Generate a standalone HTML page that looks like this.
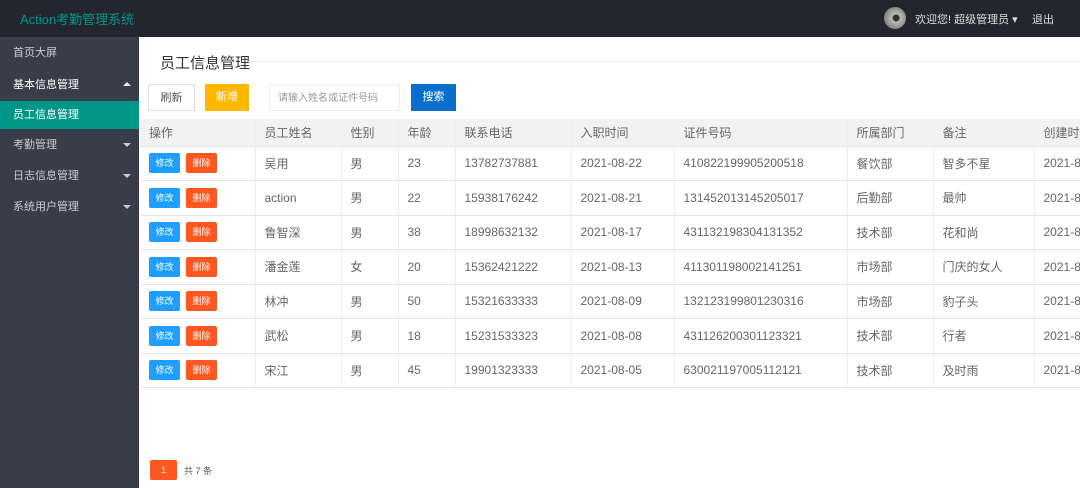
<!DOCTYPE html>
<html><head><meta charset="utf-8"><style>
*{margin:0;padding:0;box-sizing:border-box}
body{width:1080px;height:488px;overflow:hidden;background:#fff;font-family:"Liberation Sans","Noto Sans CJK SC",sans-serif;font-size:12px;color:#666;position:relative}
.hd{position:absolute;left:0;top:0;width:1080px;height:37px;background:#23262e}
.logo{position:absolute;left:20px;top:9px;color:#009688;font-size:13px}
.user{position:absolute;left:884px;top:7px;width:22px;height:22px;border-radius:50%;background:radial-gradient(circle at 55% 50%,#333 0 3px,#bbb 4px,#888 11px)}
.ht{position:absolute;top:11px;color:#ddd;font-size:11px}
.sb{position:absolute;left:0;top:37px;width:139px;height:451px;background:#393d49}
.mi{position:absolute;left:0;width:139px;height:28px;line-height:28px;padding-left:13px;color:#ccc;font-size:11px}
.mi.on{background:#009688;color:#fff}
.tri{position:absolute;right:8px;top:12px;border:4px solid transparent;border-top-color:#ccc}
.up{top:7px;border-top-color:transparent;border-bottom-color:#eee}
.title{position:absolute;left:160px;top:52px;font-size:15px;color:#333}
.tline{position:absolute;left:248px;top:61px;width:832px;height:1px;background:#f0f0f0}
.btn{position:absolute;top:84px;height:27px;line-height:27px;text-align:center;font-size:11px;color:#fff}
table{position:absolute;left:140px;top:119px;border-collapse:collapse;table-layout:fixed;width:960px}
td,th{border-bottom:1px solid #e6e6e6;border-right:1px solid #eee;text-align:left;font-weight:normal;padding-left:9px;height:34.5px;font-size:12px;color:#666;white-space:nowrap;overflow:hidden}
th{background:#f2f2f2;height:27px;color:#666}
.b{display:inline-block;width:31px;height:20px;line-height:20px;text-align:center;color:#fff;font-size:9px;border-radius:2px;vertical-align:middle}
.e{background:#1e9fff;margin-right:6px}.d{background:#ff5722}
</style></head><body>
<div class="hd"><div class="logo">Action考勤管理系统</div>
<div class="user"></div><div class="ht" style="left:915px">欢迎您! 超级管理员 ▾</div><div class="ht" style="left:1032px">退出</div></div>
<div class="sb">
<div class="mi" style="top:2px">首页大屏</div>
<div class="mi" style="top:34px;color:#fff">基本信息管理<span class="tri up"></span></div>
<div class="mi on" style="top:64px">员工信息管理</div>
<div class="mi" style="top:94px">考勤管理<span class="tri"></span></div>
<div class="mi" style="top:125px">日志信息管理<span class="tri"></span></div>
<div class="mi" style="top:156px">系统用户管理<span class="tri"></span></div>
</div>
<div class="title">员工信息管理</div><div class="tline"></div>
<div class="btn" style="left:148px;width:47px;border:1px solid #ddd;color:#555;background:#fff">刷新</div>
<div class="btn" style="left:205px;width:44px;background:#ffb800">新增</div>
<div class="btn" style="left:269px;width:131px;border:1px solid #eee;color:#999;text-align:left;padding-left:8px;font-size:10px;background:#fff">请输入姓名或证件号码</div>
<div class="btn" style="left:411px;width:45px;background:#0a6fcc">搜索</div>
<table>
<colgroup><col style="width:115px"><col style="width:86px"><col style="width:57px"><col style="width:57px"><col style="width:116px"><col style="width:103px"><col style="width:173px"><col style="width:86px"><col style="width:101px"><col style="width:66px"></colgroup>
<tr><th>操作</th><th>员工姓名</th><th>性别</th><th>年龄</th><th>联系电话</th><th>入职时间</th><th>证件号码</th><th>所属部门</th><th>备注</th><th>创建时间</th></tr>
<tr><td><span class="b e">修改</span><span class="b d">删除</span></td><td>吴用</td><td>男</td><td>23</td><td>13782737881</td><td>2021-08-22</td><td>410822199905200518</td><td>餐饮部</td><td>智多不星</td><td>2021-8</td></tr>
<tr><td><span class="b e">修改</span><span class="b d">删除</span></td><td>action</td><td>男</td><td>22</td><td>15938176242</td><td>2021-08-21</td><td>131452013145205017</td><td>后勤部</td><td>最帅</td><td>2021-8</td></tr>
<tr><td><span class="b e">修改</span><span class="b d">删除</span></td><td>鲁智深</td><td>男</td><td>38</td><td>18998632132</td><td>2021-08-17</td><td>431132198304131352</td><td>技术部</td><td>花和尚</td><td>2021-8</td></tr>
<tr><td><span class="b e">修改</span><span class="b d">删除</span></td><td>潘金莲</td><td>女</td><td>20</td><td>15362421222</td><td>2021-08-13</td><td>411301198002141251</td><td>市场部</td><td>门庆的女人</td><td>2021-8</td></tr>
<tr><td><span class="b e">修改</span><span class="b d">删除</span></td><td>林冲</td><td>男</td><td>50</td><td>15321633333</td><td>2021-08-09</td><td>132123199801230316</td><td>市场部</td><td>豹子头</td><td>2021-8</td></tr>
<tr><td><span class="b e">修改</span><span class="b d">删除</span></td><td>武松</td><td>男</td><td>18</td><td>15231533323</td><td>2021-08-08</td><td>431126200301123321</td><td>技术部</td><td>行者</td><td>2021-8</td></tr>
<tr><td><span class="b e">修改</span><span class="b d">删除</span></td><td>宋江</td><td>男</td><td>45</td><td>19901323333</td><td>2021-08-05</td><td>630021197005112121</td><td>技术部</td><td>及时雨</td><td>2021-8</td></tr>
</table>
<div style="position:absolute;left:150px;top:460px;width:27px;height:20px;line-height:20px;background:#ff5722;color:#fff;text-align:center;font-size:9px;border-radius:2px">1</div>
<div style="position:absolute;left:184px;top:464px;font-size:9px;color:#555">共 7 条</div>
</body></html>
